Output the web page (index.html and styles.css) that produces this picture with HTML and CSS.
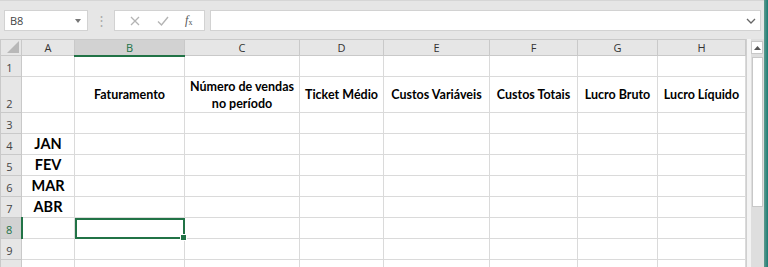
FILE: index.html
```html
<!DOCTYPE html>
<html lang="pt">
<head>
<meta charset="utf-8">
<link rel="stylesheet" href="styles.css">
</head>
<body>
<div class="app">
  <div class="main">
    <div class="toolbar">
      <div class="namebox"><span>B8</span><span class="caret"></span></div>
      <div class="vdots">⋮</div>
      <div class="fbuttons">
        <svg class="ico" width="12" height="12" viewBox="0 0 12 12"><path d="M2 2 L10 10 M10 2 L2 10" stroke="#b4b4b4" stroke-width="1.3" fill="none"/></svg>
        <svg class="ico" width="14" height="12" viewBox="0 0 14 12"><path d="M2 6.5 L5.5 10 L12 2" stroke="#b4b4b4" stroke-width="1.4" fill="none"/></svg>
        <span class="fx"><i>f</i><sub>x</sub></span>
      </div>
      <div class="fbar">
        <svg class="chev" width="10" height="6" viewBox="0 0 10 6"><path d="M1 1 L5 5 L9 1" stroke="#666" stroke-width="1.3" fill="none"/></svg>
      </div>
    </div>
    <div class="sheet">
      <table class="grid">
        <colgroup>
          <col class="c-rh"><col class="c-a"><col class="c-b"><col class="c-c"><col class="c-d"><col class="c-e"><col class="c-f"><col class="c-g"><col class="c-h">
        </colgroup>
        <thead>
          <tr class="hdr">
            <th class="corner"><span class="tri"></span></th>
            <th>A</th><th class="sel">B</th><th>C</th><th>D</th><th>E</th><th>F</th><th>G</th><th>H</th>
          </tr>
        </thead>
        <tbody>
          <tr><th class="rh">1</th><td></td><td></td><td></td><td></td><td></td><td></td><td></td><td></td></tr>
          <tr class="tall"><th class="rh">2</th><td></td><td class="bh">Faturamento</td><td class="bh">Número de vendas<br>no período</td><td class="bh">Ticket Médio</td><td class="bh">Custos Variáveis</td><td class="bh">Custos Totais</td><td class="bh">Lucro Bruto</td><td class="bh">Lucro Líquido</td></tr>
          <tr><th class="rh">3</th><td></td><td></td><td></td><td></td><td></td><td></td><td></td><td></td></tr>
          <tr><th class="rh">4</th><td class="mon">JAN</td><td></td><td></td><td></td><td></td><td></td><td></td><td></td></tr>
          <tr><th class="rh">5</th><td class="mon">FEV</td><td></td><td></td><td></td><td></td><td></td><td></td><td></td></tr>
          <tr><th class="rh">6</th><td class="mon">MAR</td><td></td><td></td><td></td><td></td><td></td><td></td><td></td></tr>
          <tr><th class="rh">7</th><td class="mon">ABR</td><td></td><td></td><td></td><td></td><td></td><td></td><td></td></tr>
          <tr><th class="rh rsel">8</th><td></td><td class="active"><span class="handle"></span></td><td></td><td></td><td></td><td></td><td></td><td></td></tr>
          <tr><th class="rh">9</th><td></td><td></td><td></td><td></td><td></td><td></td><td></td><td></td></tr>
          <tr><th class="rh"></th><td></td><td></td><td></td><td></td><td></td><td></td><td></td><td></td></tr>
        </tbody>
      </table>
      <div class="gap"></div>
      <div class="vscroll">
        <div class="up"><svg width="7" height="4" viewBox="0 0 7 4"><path d="M0 4 L3.5 0 L7 4 Z" fill="#555"/></svg></div>
        <div class="thumb"></div>
      </div>
    </div>
  </div>
  <div class="edge"></div>
</div>
</body>
</html>
```

FILE: styles.css
```css
html, body {
  margin: 0;
  padding: 0;
  background: #e6e6e6;
  overflow: hidden;
}
.app {
  display: flex;
  width: 768px;
  height: 267px;
  font-family: "Open Sans", "Noto Sans", sans-serif;
}
.main {
  flex: 1;
  display: flex;
  flex-direction: column;
  background: #e6e6e6;
  min-width: 0;
}
.edge {
  width: 4px;
  background: linear-gradient(90deg, #5f9a8e, #1b7c74);
}
.toolbar {
  height: 39px;
  flex: none;
  display: flex;
  align-items: flex-start;
  padding: 9px 0 0 4px;
  box-sizing: border-box;
  border-top: 1px solid #d6d6d6;
}
.namebox {
  width: 84px;
  height: 21px;
  box-sizing: border-box;
  background: #fff;
  border: 1px solid #d2d2d2;
  display: flex;
  align-items: center;
  justify-content: space-between;
  padding: 0 6px 0 5px;
  font-size: 11px;
  color: #444;
}
.caret {
  width: 0;
  height: 0;
  border-left: 3.5px solid transparent;
  border-right: 3.5px solid transparent;
  border-top: 4px solid #777;
}
.vdots {
  width: 26px;
  text-align: center;
  color: #aaa;
  font-size: 13px;
  line-height: 21px;
}
.fbuttons {
  width: 91px;
  height: 21px;
  box-sizing: border-box;
  background: #fff;
  border: 1px solid #d2d2d2;
  display: flex;
  align-items: center;
  justify-content: space-around;
  padding: 0 4px 0 6px;
}
.fx {
  font-family: "Liberation Serif", serif;
  font-size: 12px;
  color: #555;
}
.fx sub {
  font-size: 8px;
  vertical-align: -1px;
}
.fbar {
  flex: 1;
  margin-left: 5px;
  margin-right: 3px;
  height: 21px;
  box-sizing: border-box;
  background: #fff;
  border: 1px solid #d2d2d2;
  display: flex;
  align-items: center;
  justify-content: flex-end;
  padding-right: 4px;
}
.sheet {
  flex: 1;
  display: flex;
  overflow: hidden;
}
.grid {
  border-collapse: collapse;
  table-layout: fixed;
  width: 745px;
  background: #fff;
  align-self: flex-start;
}
.c-rh { width: 21px; }
.c-a { width: 53px; }
.c-b { width: 110px; }
.c-c { width: 115px; }
.c-d { width: 84px; }
.c-e { width: 106px; }
.c-f { width: 88px; }
.c-g { width: 80px; }
.c-h { width: 88px; }
.grid th, .grid td {
  padding: 0;
  border: 1px solid #dadada;
  box-sizing: border-box;
}
.hdr th {
  height: 16px;
  background: #e6e6e6;
  border-color: #c9c9c9;
  font-family: "Open Sans", sans-serif;
  font-weight: normal;
  font-size: 11px;
  color: #333;
  line-height: 13px;
}
.hdr th.sel {
  background: #d2d2d2;
  color: #217346;
  border-bottom: 2px solid #217346;
}
.corner {
  position: relative;
}
.tri {
  position: absolute;
  right: 2px;
  bottom: 2px;
  width: 0;
  height: 0;
  border-left: 12px solid transparent;
  border-bottom: 12px solid #b8b8b8;
}
.grid tbody tr {
  height: 21px;
}
.grid tbody tr.tall {
  height: 36px;
}
.rh {
  background: #e6e6e6;
  border-color: #c9c9c9 !important;
  font-weight: normal;
  font-size: 11px;
  color: #444;
  text-align: center;
  vertical-align: bottom;
  line-height: 17px;
  padding-right: 3px !important;
}
.rh.rsel {
  background: #d2d2d2;
  color: #217346;
  border-right: 2px solid #217346 !important;
}
.bh {
  font-family: "Lato", "Open Sans", sans-serif;
  font-weight: bold;
  font-size: 12.5px;
  color: #000;
  text-align: center;
  vertical-align: middle;
  line-height: 17px;
  white-space: nowrap;
}
.mon {
  font-family: "Lato", "Open Sans", sans-serif;
  font-weight: bold;
  font-size: 14.5px;
  line-height: 18px;
  color: #000;
  text-align: center;
  vertical-align: middle;
}
.active {
  position: relative;
  outline: 2px solid #217346;
  outline-offset: -2px;
}
.handle {
  position: absolute;
  right: -3px;
  bottom: -3px;
  width: 5px;
  height: 5px;
  background: #217346;
  border: 1px solid #fff;
}
.gap {
  width: 4px;
  background: #f3f3f3;
  border-left: 1px solid #cfcfcf;
}
.vscroll {
  width: 14px;
  background: #dedede;
  display: flex;
  flex-direction: column;
  align-items: center;
  padding-top: 2px;
}
.up {
  width: 12px;
  height: 13px;
  background: #fff;
  border: 1px solid #c8c8c8;
  box-sizing: border-box;
  display: flex;
  align-items: center;
  justify-content: center;
}
.thumb {
  margin-top: 3px;
  width: 11px;
  height: 150px;
  background: #fff;
  border: 1px solid #c8c8c8;
  box-sizing: border-box;
}
```
